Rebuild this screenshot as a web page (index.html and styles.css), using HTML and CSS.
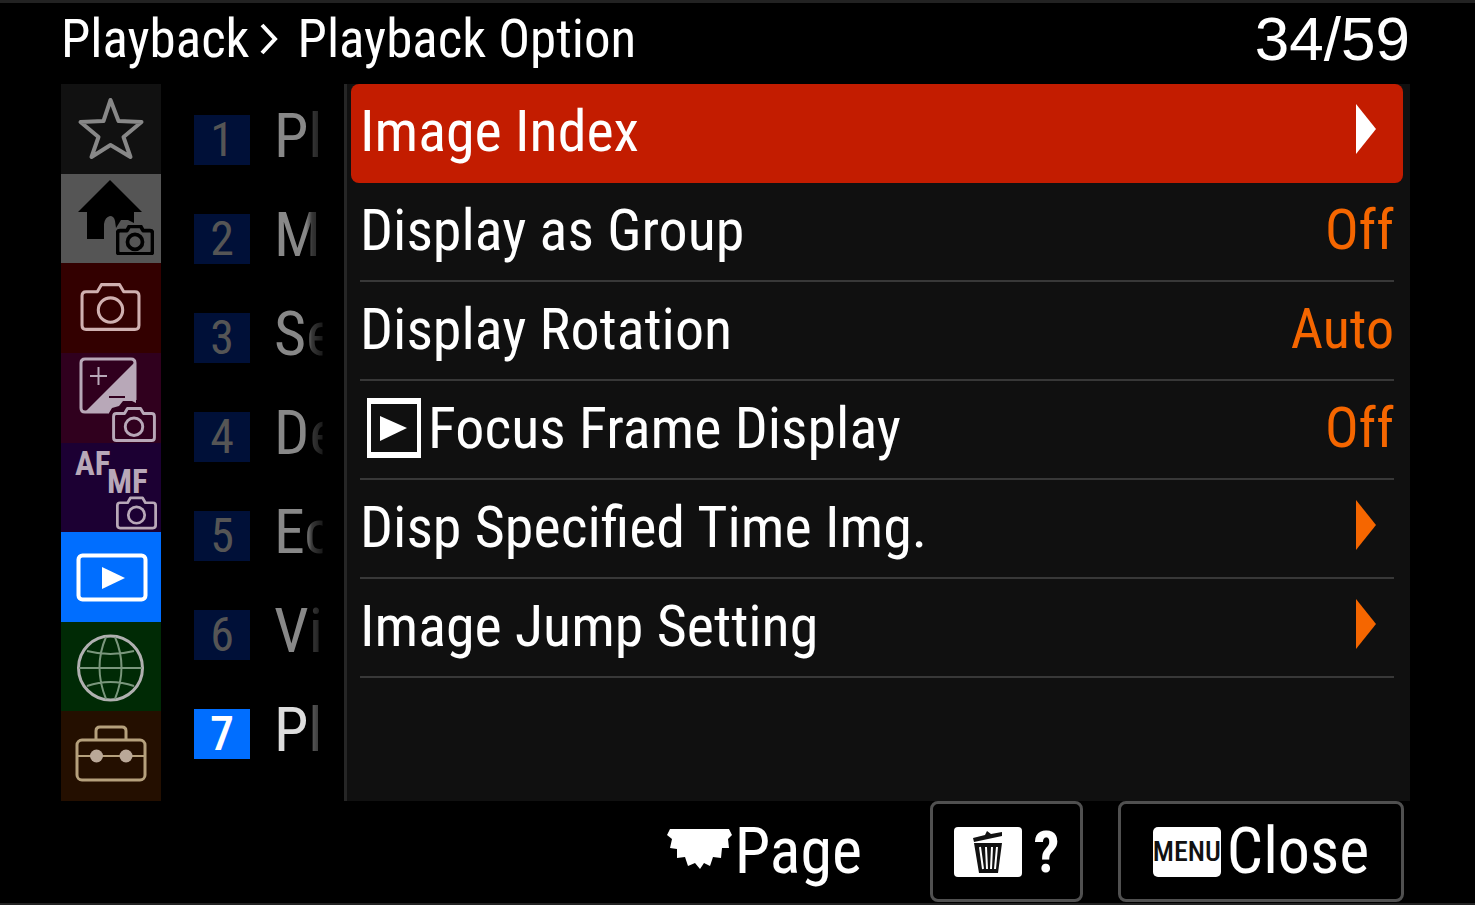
FILE: index.html
```html
<!DOCTYPE html>
<html lang="en">
<head>
<meta charset="utf-8">
<title>Playback Option</title>
<link rel="stylesheet" href="styles.css">
</head>
<body>
<svg class="defs" aria-hidden="true">
  <symbol id="camera" viewBox="0 0 60 48">
    <path d="M6 9H17L21 2H39L43 9H54Q58 9 58 13V42Q58 46 54 46H6Q2 46 2 42V13Q2 9 6 9Z"/>
    <circle cx="30" cy="27" r="12"/>
  </symbol>
  <symbol id="arrow" viewBox="0 0 20 50"><path d="M0 0L20 25L0 50Z"/></symbol>
</svg>
<header class="header">
  <h1 class="crumbs"><span>Playback</span><svg class="chevron" viewBox="0 0 18 32"><path d="M2 2L15 16L2 30"/></svg><span>Playback Option</span></h1>
  <span class="count">34/59</span>
</header>
<main class="main">
  <nav class="tabs" aria-label="Categories">
    <button class="tab star" aria-label="My Menu"><svg viewBox="0 0 100 90"><path d="M49.500 16L57.500 37L80.500 38L62.500 53L69.500 73L49.500 61L30.500 73L37.500 53L19.500 38L42.500 37Z"/></svg></button>
    <button class="tab home" aria-label="Main"><svg viewBox="0 0 100 90"><path class="solid" d="M49 7L81 39H73V50L67 47H60L55 55L54 48Q53 43 49 43Q44 44 43 51V66H26V39H17Z"/><use href="#camera" x="55" y="52" width="38" height="30"/></svg></button>
    <button class="tab shoot" aria-label="Shooting"><svg viewBox="0 0 100 90"><use href="#camera" x="19" y="19" width="61" height="50"/></svg></button>
    <button class="tab exposure" aria-label="Exposure"><svg viewBox="0 0 100 90"><path d="M48 59H24Q20 59 20 55V10Q20 6 24 6H70Q74 6 74 10V47"/><path class="fill" d="M23 60L75 8V50L71 48H62L58 53L51 55L48 60Z"/><path class="thin" d="M29 23H46M37.500 14V32"/><path class="minus" d="M48 44H64"/><use href="#camera" x="51" y="54" width="44" height="35"/></svg></button>
    <button class="tab focus" aria-label="Focus"><svg viewBox="0 0 100 90"><text x="14" y="33">AF</text><text x="46" y="51">MF</text><use href="#camera" x="55" y="54" width="41" height="34"/></svg></button>
    <button class="tab play" aria-label="Playback" aria-current="true"><svg viewBox="0 0 100 90"><rect x="17.500" y="23.500" width="67" height="44" rx="4"/><path class="solid" d="M41 35L64 46L41 57Z"/></svg></button>
    <button class="tab network" aria-label="Network"><svg viewBox="0 0 100 90"><circle cx="49.500" cy="46" r="32"/><path class="thin" d="M18 46H81M26 29Q49.500 35 73 29M26 64Q49.500 56 73 64M45 15Q32 45 45 77M54 15Q67 45 54 77"/></svg></button>
    <button class="tab setup" aria-label="Setup"><svg viewBox="0 0 100 90"><rect x="16" y="29" width="68" height="40" rx="5"/><path d="M35 29V20Q35 16 39 16H61Q65 16 65 20V29"/><path class="thin" d="M16 45H84"/><circle class="solid" cx="35.500" cy="45" r="6.500"/><circle class="solid" cx="65" cy="45" r="6.500"/></svg></button>
  </nav>
  <nav class="groups" aria-label="Groups">
    <button class="group"><span class="num">1</span><span class="name">Pl.</span></button>
    <button class="group"><span class="num">2</span><span class="name">M.</span></button>
    <button class="group"><span class="num">3</span><span class="name">Se</span></button>
    <button class="group"><span class="num">4</span><span class="name">De</span></button>
    <button class="group"><span class="num">5</span><span class="name">Ec</span></button>
    <button class="group"><span class="num">6</span><span class="name">Vi.</span></button>
    <button class="group current" aria-current="true"><span class="num">7</span><span class="name">Pl.</span></button>
  </nav>
  <section class="panel" aria-label="Playback Option">
    <button class="row selected"><span>Image Index</span><svg class="arrow"><use href="#arrow"/></svg></button>
    <button class="row"><span>Display as Group</span><span class="value">Off</span></button>
    <button class="row"><span>Display Rotation</span><span class="value">Auto</span></button>
    <button class="row"><svg class="playbox" viewBox="0 0 54 60"><path d="M0 0H54V60H0ZM4 6V54H50V6Z"/><path d="M13 18L40 30L13 43Z"/></svg><span>Focus Frame Display</span><span class="value">Off</span></button>
    <button class="row"><span>Disp Specified Time Img.</span><svg class="arrow"><use href="#arrow"/></svg></button>
    <button class="row"><span>Image Jump Setting</span><svg class="arrow"><use href="#arrow"/></svg></button>
  </section>
</main>
<footer class="footer">
  <span class="page"><svg class="dial" viewBox="0 0 65 40"><path d="M3 0H62L65 6L61 10L62 19H55L54 29L46 28L43 37L37 34L33 40L28 34L21 37L18 28L10 29V20L3 19L5 10L0 6Z"/></svg><span>Page</span></span>
  <button class="key help" aria-label="Help"><svg class="trash" viewBox="0 0 68 50"><rect class="plate" width="68" height="50" rx="4"/><path class="ink" d="M19 11L31 8L33 4L37 7L48 5V9L20 15ZM20 16H48L44 46H25Z"/><path class="slots" d="M26 20L29 42M32 20L33 42M38 20L37 42M43 20L41 42"/></svg><span class="mark">?</span></button>
  <button class="key close"><span class="menu">MENU</span><span>Close</span></button>
</footer>
</body>
</html>
```
FILE: styles.css
```css
* { box-sizing: border-box; }

body {
  margin: 0;
  min-height: 100vh;
  display: flex;
  flex-direction: column;
  background: #000;
  color: #fff;
  border-top: 3px solid #222;
  border-bottom: 2px solid #222;
  font-family: "Roboto Condensed", Roboto, "Liberation Sans", sans-serif;
}

button {
  margin: 0;
  padding: 0;
  border: 0;
  background: none;
  color: inherit;
  font: inherit;
  text-align: left;
}

svg { display: block; flex: none; }
.defs { position: absolute; width: 0; height: 0; }

.header {
  height: 81px;
  padding: 0 65px 10px 61px;
  display: flex;
  align-items: center;
  justify-content: space-between;
}
.crumbs {
  margin: 0;
  display: flex;
  align-items: center;
  font-size: 53px;
  font-weight: 400;
  white-space: nowrap;
}
.chevron {
  width: 18px;
  height: 32px;
  margin: 0 20px 0 10px;
  fill: none;
  stroke: #fff;
  stroke-width: 4;
}
.count { font-family: "Liberation Sans", sans-serif; font-size: 62px; }

.main {
  flex: 1;
  display: flex;
  padding: 0 65px 0 61px;
}

.tabs { width: 100px; display: flex; flex-direction: column; }
.tab {
  flex: 1;
  display: flex;
  align-items: center;
  color: #b8a8b8;
}
.tab svg {
  width: 100px;
  height: 90px;
  margin: -1px 0;
  fill: none;
  stroke: currentColor;
  stroke-width: 3;
  stroke-linejoin: round;
}
.tab .solid { fill: currentColor; stroke: none; }
.tab .fill { fill: currentColor; stroke: none; }
.tab .thin { stroke-width: 2; }
.tab .minus { stroke: #33001f; stroke-width: 2; }
.tab text {
  fill: currentColor;
  stroke: none;
  font-size: 33px;
  font-weight: 700;
}
.star { background: #111; color: #888; }
.tab.star svg { stroke-width: 4; }
.home { background: #555; color: #000; }
.home use { stroke-width: 6; }
.shoot { background: #330000; color: #d0b0b0; }
.exposure { background: #30001e; }
.focus { background: #1c0033; }
.exposure use, .focus use { stroke-width: 4; }
.play { background: #006eff; color: #fff; }
.tab.play svg { stroke-width: 4; }
.network { background: #002a05; color: #b0b0b0; }
.network .thin { color: #7a967c; stroke: currentColor; }
.setup { background: #240f00; color: #b5a07c; }
.setup .solid { color: #baa898; }

.groups {
  width: 183px;
  padding: 6px 0 0 33px;
  display: flex;
  flex-direction: column;
}
.group {
  height: 99px;
  display: flex;
  align-items: center;
  color: #888;
}
.num {
  width: 56px;
  height: 50px;
  display: flex;
  align-items: center;
  justify-content: center;
  background: #001038;
  color: #555;
  font-size: 48px;
}
.name {
  flex: 1;
  padding: 0 0 8px 24px;
  font-size: 62px;
  white-space: nowrap;
  mask-image: linear-gradient(to right, #000 56px, #0006 62px, #0003 72px, transparent 73px);
}
.current { color: #ddd; }
.current .num { background: #006eff; color: #fff; font-weight: 500; }

.panel {
  flex: 1;
  min-width: 0;
  padding: 0 7px 0 4px;
  background: #101010;
  border-left: 3px solid #262626;
}
.row {
  width: 100%;
  height: 99px;
  padding: 0 9px 6px 9px;
  display: flex;
  align-items: center;
  font-size: 58px;
  white-space: nowrap;
  background: linear-gradient(#383838, #383838) center bottom / calc(100% - 18px) 2px no-repeat;
}
.selected { background: #c31c00; border-radius: 8px; }
.value { margin-left: auto; color: #f56600; font-size: 56px; }
.arrow {
  width: 20px;
  height: 50px;
  margin: 0 18px 4px auto;
  fill: #f56600;
}
.selected .arrow { fill: #fff; }
.playbox {
  width: 54px;
  height: 60px;
  margin: 0 7px;
  fill: #fff;
  fill-rule: evenodd;
}

.footer {
  height: 102px;
  padding: 0 71px 1px 61px;
  display: flex;
  align-items: stretch;
  justify-content: flex-end;
  font-size: 64px;
}
.page {
  display: flex;
  align-items: center;
  margin-right: 68px;
}
.dial { width: 65px; height: 40px; margin: 0 3px 6px 0; fill: #fff; }
.key {
  display: flex;
  align-items: center;
  justify-content: center;
  border: 3px solid #505050;
  border-radius: 8px;
}
.help { width: 153px; gap: 12px; margin-right: 35px; }
.close { width: 286px; gap: 6px; }
.trash { width: 68px; height: 50px; }
.plate { fill: #fff; }
.ink { fill: #111; }
.slots { fill: none; stroke: #fff; stroke-width: 2; }
.mark { font-size: 58px; font-weight: 700; }
.menu {
  width: 68px;
  height: 50px;
  display: flex;
  align-items: center;
  justify-content: center;
  border-radius: 5px;
  background: #fff;
  color: #111;
  font-size: 28px;
  font-weight: 500;
}
```
